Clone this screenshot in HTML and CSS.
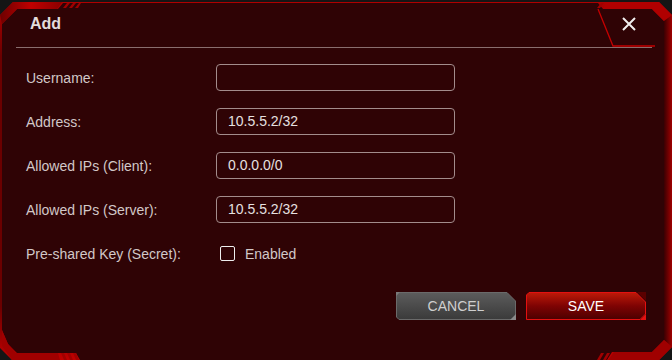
FILE: index.html
```html
<!DOCTYPE html>
<html>
<head>
<meta charset="utf-8">
<link rel="stylesheet" href="styles.css">
</head>
<body>
<div class="dialog">
  <svg class="frame" width="672" height="360" viewBox="0 0 672 360">
    <defs>
      <linearGradient id="tl" x1="0" y1="0" x2="1" y2="0">
        <stop offset="0" stop-color="#6e0000"/>
        <stop offset="0.5" stop-color="#c00000"/>
        <stop offset="1" stop-color="#8a0000"/>
      </linearGradient>
      <linearGradient id="rb" x1="0" y1="0" x2="1" y2="0">
        <stop offset="0" stop-color="#3a0002"/>
        <stop offset="1" stop-color="#a00000"/>
      </linearGradient>
      <linearGradient id="lb" x1="0" y1="0" x2="0" y2="1">
        <stop offset="0" stop-color="#b00000"/>
        <stop offset="0.15" stop-color="#6a0000"/>
        <stop offset="0.85" stop-color="#6a0000"/>
        <stop offset="1" stop-color="#c00000"/>
      </linearGradient>
    </defs>
    <polygon points="0,15 13,2 659,2 672,15 672,347 659,360 12,360 0,348" fill="url(#lb)"/>
    <polygon points="664,20 672,15 672,347 664,340" fill="url(#rb)"/>
    <polygon points="2,24 17,9 58,9 63,3 598,3 603,9 652,9 664,21 664,340 652,352 612,352 607,360 80,360 76,353 17,353 8,344 2,330" fill="#2f0305"/>
    <polygon points="13,2 62,2 57,9 17,9 2,24 0,15" fill="url(#tl)"/>
    <polygon points="606,2 659,2 672,15 664,21 652,9 603,9" fill="#b00000"/>
    <polygon points="16,353 58,353 60,360 12,360 2,346 2,330 8,344" fill="#a00000"/>
    <polygon points="614,352 652,352 664,340 672,347 659,360 608,360" fill="#a00000"/>
    <g fill="#a00000">
      <polygon points="63,8 67,3 70,3 66,8"/>
      <polygon points="69,8 73,3 76,3 72,8"/>
      <polygon points="75,8 79,3 81,3 78,8"/>
      <polygon points="597,8 601,3 604,3 600,8"/>
      <polygon points="61,353 64,353 67,360 64,360"/>
      <polygon points="67,353 70,353 73,360 70,360"/>
      <polygon points="73,353 76,353 79,360 76,360"/>
      <polygon points="597,360 601,353 604,353 600,360"/>
      <polygon points="603,360 607,353 610,353 606,360"/>
    </g>
    <polyline points="598,9 613,46 655,46" fill="none" stroke="#c40000" stroke-width="1.3"/>
  </svg>
  <div class="content">
    <header class="head">
      <h1 class="title">Add</h1>
      <button class="close" type="button" aria-label="Close">
        <svg width="14" height="14" viewBox="0 0 14 14"><path d="M1 1L13 13M13 1L1 13" stroke="#f0eeee" stroke-width="2" fill="none"/></svg>
      </button>
    </header>
    <div class="form">
      <span class="lbl">Username:</span><div class="field"></div>
      <span class="lbl">Address:</span><div class="field">10.5.5.2/32</div>
      <span class="lbl">Allowed IPs (Client):</span><div class="field">0.0.0.0/0</div>
      <span class="lbl">Allowed IPs (Server):</span><div class="field">10.5.5.2/32</div>
      <span class="lbl">Pre-shared Key (Secret):</span><div class="check"><span class="box"></span><span>Enabled</span></div>
    </div>
    <div class="actions">
      <button class="btn cancel" type="button">
        <svg class="btn-bg" width="120" height="28" viewBox="0 0 120 28">
          <defs><linearGradient id="cg" x1="0" y1="0" x2="0" y2="1"><stop offset="0" stop-color="#5c5c5c"/><stop offset="1" stop-color="#3a3a3a"/></linearGradient></defs>
          <polygon points="3,0.5 111,0.5 119.5,9 119.5,25 117,27.5 3,27.5 0.5,25 0.5,3" fill="url(#cg)" stroke="#6a6a6a"/>
          <polygon points="114,28 120,22 120,28" fill="#8a8a8a"/>
          <polygon points="0,0 4,0 0,4" fill="#7a7a7a"/>
        </svg>
        <span>CANCEL</span>
      </button>
      <button class="btn save" type="button">
        <svg class="btn-bg" width="120" height="28" viewBox="0 0 120 28">
          <defs><linearGradient id="sg" x1="0" y1="0" x2="0" y2="1"><stop offset="0" stop-color="#be1a08"/><stop offset="0.5" stop-color="#7e0303"/><stop offset="1" stop-color="#4c0000"/></linearGradient></defs>
          <polygon points="111,0 120,0 120,9" fill="#5a0000"/>
          <polygon points="3,0.5 110,0.5 119.5,10 119.5,22 114,27.5 0.5,27.5 0.5,3" fill="url(#sg)" stroke="#e41010"/>
          <polygon points="114,28 120,22 120,28" fill="#e41010"/>
        </svg>
        <span>SAVE</span>
      </button>
    </div>
  </div>
</div>
</body>
</html>
```

FILE: styles.css
```css
html, body {
  margin: 0;
  padding: 0;
}
body {
  background: #151515;
  font-family: "Liberation Sans", Arial, sans-serif;
}
.dialog {
  position: relative;
  width: 672px;
  height: 360px;
  overflow: hidden;
}
.frame {
  position: absolute;
  top: 0;
  left: 0;
  display: block;
}
.content {
  position: relative;
}
.head {
  height: 47px;
  margin: 0 20px 0 16px;
  padding-left: 14px;
  border-bottom: 1px solid #8a6e6e;
  display: flex;
  align-items: center;
  justify-content: space-between;
}
.title {
  margin: 0;
  font-size: 16px;
  font-weight: bold;
  color: #e2dcdc;
}
.close {
  width: 20px;
  height: 20px;
  margin-right: 13px;
  padding: 0;
  border: 0;
  background: none;
  display: flex;
  align-items: center;
  justify-content: center;
}
.form {
  display: grid;
  grid-template-columns: 190px 239px;
  grid-auto-rows: 27px;
  row-gap: 17px;
  align-items: center;
  padding: 16px 0 0 26px;
}
.lbl {
  font-size: 14px;
  color: #d2c8c8;
}
.field {
  box-sizing: border-box;
  height: 27px;
  border: 1px solid #a38c8c;
  border-radius: 4px;
  padding-left: 11px;
  font-size: 14px;
  line-height: 25px;
  color: #e6e0e0;
}
.check {
  display: flex;
  align-items: center;
  gap: 10px;
  padding-left: 4px;
  font-size: 14px;
  color: #d2c8c8;
}
.box {
  box-sizing: border-box;
  width: 15px;
  height: 15px;
  border: 1px solid #eeeeee;
  border-radius: 2px;
}
.actions {
  display: flex;
  justify-content: flex-end;
  gap: 10px;
  margin-top: 25px;
  padding-right: 26px;
}
.btn {
  position: relative;
  width: 120px;
  height: 28px;
  padding: 0;
  border: 0;
  background: none;
  font-family: "Liberation Sans", Arial, sans-serif;
  font-size: 14px;
  display: flex;
  align-items: center;
  justify-content: center;
}
.btn-bg {
  position: absolute;
  top: 0;
  left: 0;
}
.btn span {
  position: relative;
}
.cancel {
  color: #cfcfcf;
}
.save {
  color: #ffffff;
}
```
